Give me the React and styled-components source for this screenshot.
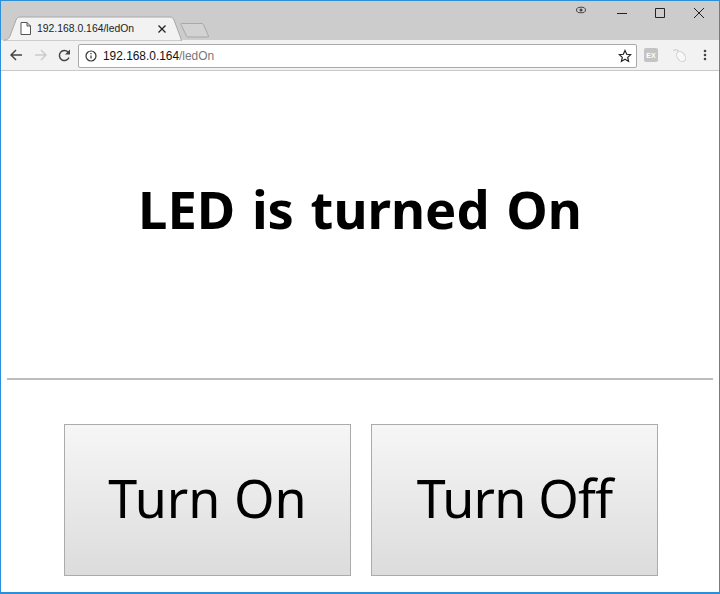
import styled, { createGlobalStyle } from 'styled-components';

const Global = createGlobalStyle`
  html, body { margin: 0; padding: 0; background: #fff; }
  body { font-family: "Noto Sans", "Open Sans", sans-serif; }
`;

const Win = styled.div`
  width: 720px;
  height: 594px;
  box-sizing: border-box;
  border: 1px solid #2b90d9;
  border-bottom-width: 2px;
  display: flex;
  flex-direction: column;
  overflow: hidden;
  background: #fff;
`;

const TitleBar = styled.div`
  height: 39px;
  flex: none;
  background: #cccccc;
  display: flex;
  align-items: flex-end;
`;

const Tab = styled.div`
  position: relative;
  width: 180px;
  height: 25px;
  margin: 0 0 -1px 1px;
  flex: none;
  display: flex;
  align-items: center;
  padding-left: 18px;
  box-sizing: border-box;
  gap: 6px;
`;

const TabShape = styled.svg`
  position: absolute;
  left: 0;
  top: 0;
`;

const TabIcon = styled.svg`
  position: relative;
  flex: none;
`;

const TabText = styled.span`
  position: relative;
  width: 115px;
  font: 10.4px "Liberation Sans", Arial, sans-serif;
  color: #222;
  white-space: nowrap;
`;

const NewTab = styled.svg`
  margin: 0 0 2px -2px;
`;

const WinControls = styled.div`
  margin-left: auto;
  align-self: flex-start;
  display: flex;
  align-items: center;
`;

const Incognito = styled.svg`
  margin-right: 30px;
  margin-top: 1px;
`;

const WinBtn = styled.svg`
  display: block;
  margin: 7px ${(p) => p.$mr || 0}px 0 ${(p) => p.$ml || 0}px;
`;

const Toolbar = styled.div`
  height: 30px;
  flex: none;
  background: #f2f2f2;
  border-bottom: 1px solid #c9c9c9;
  display: flex;
  align-items: center;
`;

const NavIcon = styled.svg`
  flex: none;
  margin-left: ${(p) => p.$ml || 0}px;
`;

const Omnibox = styled.div`
  width: 559px;
  height: 24px;
  margin: 1px 0 0 7px;
  box-sizing: border-box;
  background: #fff;
  border: 1px solid #a9a9a9;
  border-radius: 2px;
  display: flex;
  align-items: center;
  padding: 0 4px 0 6px;
  gap: 6px;
`;

const Url = styled.span`
  font: 11.9px "Liberation Sans", Arial, sans-serif;
  color: #111;
  flex: 1;
  em { font-style: normal; color: #777; }
`;

const ExBadge = styled.span`
  width: 14px;
  height: 14px;
  margin-left: 7px;
  background: #c4c4c4;
  border-radius: 2px;
  color: #fff;
  font: bold 7px "Liberation Sans", Arial, sans-serif;
  display: flex;
  align-items: center;
  justify-content: center;
  flex: none;
`;

const Page = styled.main`
  flex: 1;
  display: flex;
  flex-direction: column;
  padding: 0 6px;
`;

const Heading = styled.h1`
  margin: 0;
  height: 307px;
  box-sizing: border-box;
  padding-top: 104px;
  font-size: 52.5px;
  line-height: 68px;
  font-weight: 700;
  text-align: center;
  color: #000;
  word-spacing: 3px;
  flex: none;
`;

const Rule = styled.hr`
  margin: 0;
  border: none;
  height: 2px;
  background: #bdbdbd;
  flex: none;
`;

const Buttons = styled.div`
  display: flex;
  gap: 20px;
  margin: 44px 0 0 57px;
`;

const Btn = styled.button`
  width: 287px;
  height: 152px;
  box-sizing: border-box;
  border: 1px solid #ababab;
  background: linear-gradient(#f6f6f6, #dcdcdc);
  font-family: "Noto Sans", "Open Sans", sans-serif;
  font-size: 52px;
  letter-spacing: ${(p) => p.$tight ? '-0.8px' : '0'};
  color: #000;
  padding: 0 0 5px;
`;

export default function App() {
  return (
    <>
      <Global />
      <Win>
        <TitleBar>
          <Tab>
            <TabShape width="180" height="25" viewBox="0 0 180 25">
              <path d="M2 25 L2 24 C6 24 7 22 8 20 L14 4 C15 2 16 1 18 1 L168 1 C170 1 171 2 172 4 L178 20 C179 23 179 24 180 25 Z" fill="#f2f2f2" stroke="#a8a8a8" />
            </TabShape>
            <TabIcon width="11" height="13" viewBox="0 0 11 13">
              <path d="M1 .5h6l3.500 3.500v8.500h-9.500z M7 .5v3.500h3.500" fill="#fff" stroke="#555" />
            </TabIcon>
            <TabText>192.168.0.164/ledOn</TabText>
            <TabIcon width="8" height="8" viewBox="0 0 8 8">
              <path d="M.5.5l7 7M7.500.5l-7 7" stroke="#222" strokeWidth="1.300" />
            </TabIcon>
          </Tab>
          <NewTab width="30" height="16" viewBox="0 0 30 16">
            <path d="M1.500 1.500H22q1 0 1.500 1L28.500 14q.2 1-1 1H8q-1 0-1.500-1L1 2.500q-.3-1 .5-1z" fill="#d2d2d2" stroke="#a8a8a8" />
          </NewTab>
          <WinControls>
            <Incognito width="12" height="8" viewBox="0 0 12 8">
              <ellipse cx="6" cy="4" rx="4.500" ry="2.800" fill="none" stroke="#444" />
              <circle cx="6" cy="4" r="1.500" fill="#444" />
            </Incognito>
            <WinBtn width="10" height="10" viewBox="0 0 10 10">
              <path d="M0 5.500h10" stroke="#222" />
            </WinBtn>
            <WinBtn $ml={28} width="10" height="10" viewBox="0 0 10 10">
              <path d="M.5.500h9v9h-9z" fill="none" stroke="#222" />
            </WinBtn>
            <WinBtn $ml={29} $mr={15} width="10" height="10" viewBox="0 0 10 10">
              <path d="M0 0l10 10M10 0L0 10" stroke="#222" />
            </WinBtn>
          </WinControls>
        </TitleBar>
        <Toolbar>
          <NavIcon $ml={9} width="12" height="12" viewBox="0 0 12 12">
            <path d="M12 6H1.500M6 1L1 6l5 5" fill="none" stroke="#444" strokeWidth="1.500" />
          </NavIcon>
          <NavIcon $ml={13} width="12" height="12" viewBox="0 0 12 12">
            <path d="M0 6h10.500M6 1l5 5-5 5" fill="none" stroke="#ccc" strokeWidth="1.500" />
          </NavIcon>
          <NavIcon $ml={11} width="13" height="13" viewBox="0 0 13 13">
            <path d="M11 8.500A5 5 0 1 1 10 3" fill="none" stroke="#444" strokeWidth="1.500" />
            <path d="M12 .5v5H7z" fill="#444" />
          </NavIcon>
          <Omnibox>
            <svg width="12" height="12" viewBox="0 0 12 12">
              <circle cx="6" cy="6" r="5" fill="none" stroke="#333" strokeWidth="1.200" />
              <path d="M6 5.500v3M6 3v1.300" stroke="#333" strokeWidth="1.200" />
            </svg>
            <Url>192.168.0.164<em>/ledOn</em></Url>
            <svg width="14" height="14" viewBox="0 0 14 14">
              <path d="M7 1.500l1.700 3.800 4 .4-3 2.700.9 4L7 10.300l-3.600 2.100.9-4-3-2.700 4-.4z" fill="none" stroke="#222" strokeWidth="1.200" />
            </svg>
          </Omnibox>
          <ExBadge>EX</ExBadge>
          <NavIcon $ml={14} width="15" height="15" viewBox="0 0 15 15">
            <path d="M1 2.500q3-2 6 .5" fill="none" stroke="#c8c8c8" />
            <ellipse cx="9" cy="8.500" rx="3.800" ry="5.500" transform="rotate(-35 9 8.500)" fill="#f8f8f8" stroke="#d0d0d0" />
          </NavIcon>
          <NavIcon $ml={16} width="4" height="12" viewBox="0 0 4 12">
            <circle cx="2" cy="2" r="1.300" fill="#444" />
            <circle cx="2" cy="6" r="1.300" fill="#444" />
            <circle cx="2" cy="10" r="1.300" fill="#444" />
          </NavIcon>
        </Toolbar>
        <Page>
          <Heading>LED is turned On</Heading>
          <Rule />
          <Buttons>
            <Btn>Turn On</Btn>
            <Btn $tight>Turn Off</Btn>
          </Buttons>
        </Page>
      </Win>
    </>
  );
}
